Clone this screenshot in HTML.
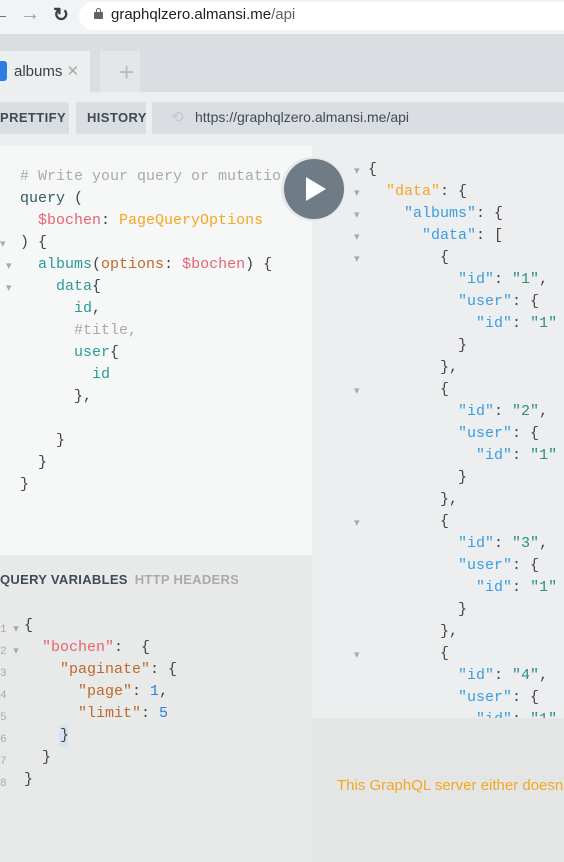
<!DOCTYPE html>
<html><head><style>
*{margin:0;padding:0;box-sizing:border-box}
body{width:564px;height:862px;overflow:hidden;position:relative;background:#e8e9e9;font-family:"Liberation Sans",sans-serif}
.a{position:absolute}
.m{font-family:"Liberation Mono",monospace;font-size:15px;white-space:pre;line-height:22px}
.ln{position:absolute;font-family:"Liberation Mono",monospace;font-size:11px;color:#aaa;white-space:pre}
</style></head><body>
<div class="a" style="left:0;top:0;width:564px;height:34px;background:#f1f3f4"></div>
<div class="a" style="left:-10px;top:3px;color:#5f6368;font-size:20px">←</div>
<div class="a" style="left:20px;top:3px;color:#9aa0a6;font-size:20px">→</div>
<div class="a" style="left:53px;top:4px;color:#3c4043;font-size:19px;font-weight:bold">↻</div>
<div class="a" style="left:79px;top:2px;width:500px;height:28px;background:#fff;border-radius:14px"></div>
<div class="a" style="left:94px;top:12px;width:9px;height:7px;background:#5f6368;border-radius:1px"></div>
<div class="a" style="left:96px;top:8px;width:5px;height:6px;border:1.5px solid #5f6368;border-bottom:none;border-radius:3px 3px 0 0"></div>
<div class="a" style="left:111px;top:6px;font-size:15px;color:#202124">graphqlzero.almansi.me<span style="color:#5f6368">/api</span></div>
<div class="a" style="left:0;top:34px;width:564px;height:58px;background:#dadde1"></div>
<div class="a" style="left:0;top:51px;width:90px;height:41px;background:#eceef0"></div>
<div class="a" style="left:0;top:61px;width:7px;height:20px;background:#2b7de1;border-radius:0 3px 3px 0"></div>
<div class="a" style="left:14px;top:62px;font-size:15px;color:#3c4043">albums <span style="color:#aaa">✕</span></div>
<div class="a" style="left:100px;top:51px;width:40px;height:41px;background:#e4e7ea"></div>
<div class="a" style="left:119px;top:57px;color:#b8bcc0;font-size:26px;font-weight:300">+</div>
<div class="a" style="left:0;top:92px;width:564px;height:54px;background:#eceef0"></div>
<div class="a" style="left:0;top:102px;width:69px;height:32px;background:#dadde1;border-radius:2px;font-size:13px;font-weight:bold;color:#3f4b56;padding:8px 0 0 0;letter-spacing:.4px">PRETTIFY</div>
<div class="a" style="left:76px;top:102px;width:70px;height:32px;background:#dadde1;border-radius:2px;font-size:13px;font-weight:bold;color:#3f4b56;padding:8px 0 0 11px;letter-spacing:.4px">HISTORY</div>
<div class="a" style="left:152px;top:102px;width:412px;height:32px;background:#dadde1;border-radius:2px"></div>
<div class="a" style="left:171px;top:108px;color:#c4c7ca;font-size:15px">⟲</div>
<div class="a" style="left:195px;top:109px;font-size:14px;color:#3f4b56">https://graphqlzero.almansi.me/api</div>

<div class="a" style="left:0;top:146px;width:312px;height:409px;background:#f6f7f7"></div>
<div class="a" style="left:312px;top:146px;width:252px;height:572px;background:#edeef0"></div>

<div class="a m" style="left:20px;top:166px;color:#444"><span style="color:#aaa"># Write your query or mutatio</span>
<span style="color:#2f5c66">query</span> (
  <span style="color:#e8636f">$bochen</span>: <span style="color:#f5a623">PageQueryOptions</span>
) {
  <span style="color:#2c9a95">albums</span>(<span style="color:#c0692b">options</span>: <span style="color:#e8636f">$bochen</span>) {
    <span style="color:#2c9a95">data</span>{
      <span style="color:#2c9a95">id</span>,
      <span style="color:#aaa">#title,</span>
      <span style="color:#2c9a95">user</span>{
        <span style="color:#2c9a95">id</span>
      },

    }
  }
}</div>
<div class="ln" style="left:0;top:237px">▾</div><div class="ln" style="left:6px;top:259px">▾</div><div class="ln" style="left:6px;top:281px">▾</div>

<div class="a" style="left:281px;top:157px;width:64px;height:64px;border-radius:50%;background:#e4e6e8"></div>
<div class="a" style="left:284px;top:159px;width:60px;height:60px;border-radius:50%;background:#6f7b85"></div>
<svg class="a" style="left:306px;top:177px" width="22" height="24"><path d="M0 0L20 12L0 24Z" fill="#fff"/></svg>

<div class="a m" style="left:368px;top:159px;color:#444">{
  <span style="color:#f5a623">"data"</span>: {
    <span style="color:#3a9ee0">"albums"</span>: {
      <span style="color:#3a9ee0">"data"</span>: [
        {
          <span style="color:#3a9ee0">"id"</span>: <span style="color:#2c8c86">"1"</span>,
          <span style="color:#3a9ee0">"user"</span>: {
            <span style="color:#3a9ee0">"id"</span>: <span style="color:#2c8c86">"1"</span>
          }
        },
        {
          <span style="color:#3a9ee0">"id"</span>: <span style="color:#2c8c86">"2"</span>,
          <span style="color:#3a9ee0">"user"</span>: {
            <span style="color:#3a9ee0">"id"</span>: <span style="color:#2c8c86">"1"</span>
          }
        },
        {
          <span style="color:#3a9ee0">"id"</span>: <span style="color:#2c8c86">"3"</span>,
          <span style="color:#3a9ee0">"user"</span>: {
            <span style="color:#3a9ee0">"id"</span>: <span style="color:#2c8c86">"1"</span>
          }
        },
        {
          <span style="color:#3a9ee0">"id"</span>: <span style="color:#2c8c86">"4"</span>,
          <span style="color:#3a9ee0">"user"</span>: {
            <span style="color:#3a9ee0">"id"</span>: <span style="color:#2c8c86">"1"</span></div>
<div class="a" style="left:312px;top:718px;width:252px;height:144px;background:#e4e5e5"></div>
<div class="ln" style="left:354px;top:161px;line-height:22px">▾
▾
▾
▾
▾





▾





▾





▾</div>
<div class="a" style="left:337px;top:777px;font-size:15px;color:#f5a623;white-space:nowrap">This GraphQL server either doesn't</div>

<div class="a" style="left:0;top:572px;font-size:13px;font-weight:bold;color:#3f4b56;letter-spacing:.3px">QUERY VARIABLES <span style="color:#aaa;margin-left:3px">HTTP HEADERS</span></div>
<div class="ln" style="left:0;top:619px;line-height:22px">1 ▾
2 ▾
3
4
5
6
7
8</div>
<div class="a" style="left:59px;top:725px;width:9px;height:22px;background:#d2e4f4"></div>
<div class="a m" style="left:24px;top:615px;color:#444">{
  <span style="color:#e8636f">"bochen"</span>:  {
    <span style="color:#c0692b">"paginate"</span>: {
      <span style="color:#c0692b">"page"</span>: <span style="color:#2b7de1">1</span>,
      <span style="color:#c0692b">"limit"</span>: <span style="color:#2b7de1">5</span>
    }
  }
}</div>
</body></html>
